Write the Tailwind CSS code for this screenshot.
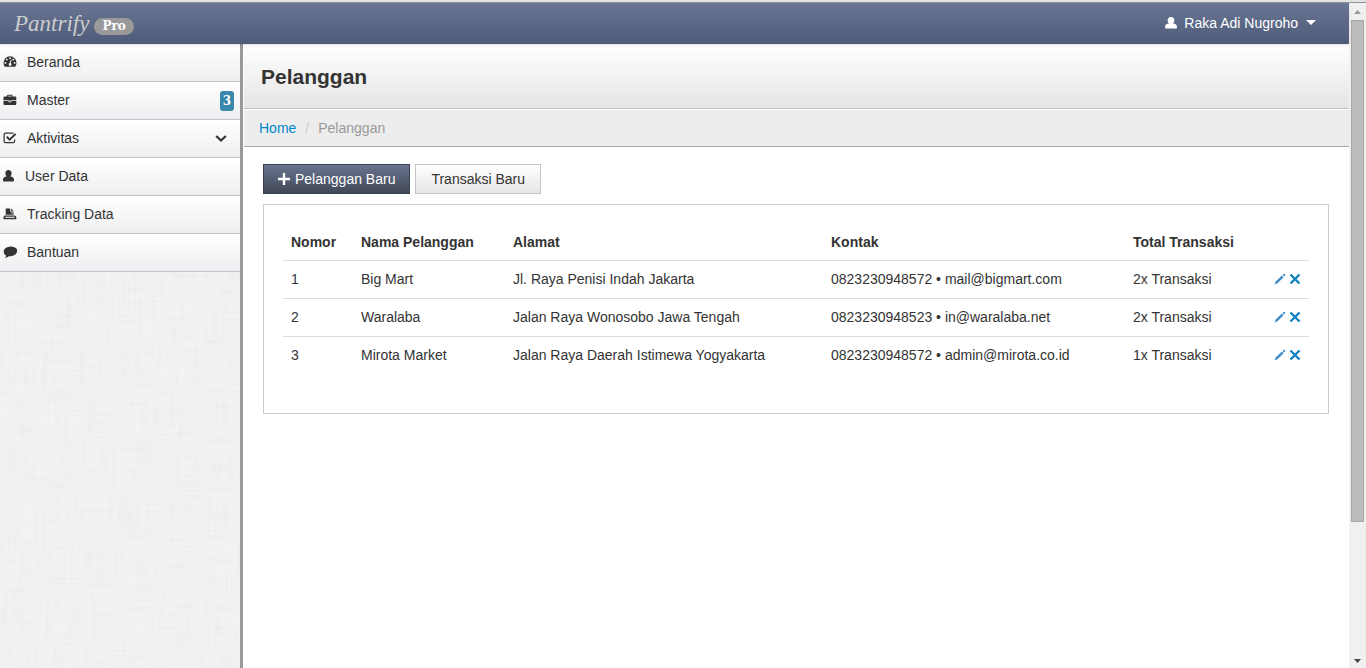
<!DOCTYPE html>
<html lang="id">
<head>
<meta charset="utf-8">
<title>Pelanggan - Pantrify Pro</title>
<script src="https://cdn.jsdelivr.net/npm/@tailwindcss/browser@4"></script>
</head>
<body class="flex h-screen flex-col overflow-hidden bg-white font-['Liberation_Sans',Arial,sans-serif] text-sm leading-5 text-[#333]">
<svg class="hidden" aria-hidden="true">
  <symbol id="user" viewBox="0 0 11 12" preserveAspectRatio="none"><path d="M5.500 0C7.500 0 8.600 1.300 8.600 3.200c0 1.300-.5 2.500-1.200 3.200C9.500 6.700 11 7.700 11 9.600V10.600Q11 11.500 10 11.500H1Q0 11.500 0 10.600V9.600C0 7.700 1.500 6.700 3.600 6.400 2.900 5.700 2.400 4.500 2.400 3.200 2.400 1.300 3.500 0 5.500 0z"/></symbol>
  <symbol id="pencil" viewBox="0 0 12 12"><path d="M.6 11.400 1.700 8.500 7.900 2.500 9.600 4.200 3.500 10.200zM8.600 1.900l.9-.9q.5-.4 1 0l.6.6q.4.500 0 1l-.9.9z"/></symbol>
  <symbol id="cross" viewBox="0 0 12 12"><path d="M1.500 1.500 10.500 10.500M10.500 1.500 1.500 10.500" fill="none" stroke="currentColor" stroke-width="2.400"/></symbol>
</svg>

<div class="h-[3px] shrink-0 border-b border-[#8f949c] bg-[#e4e4e4]"></div>
<div class="flex min-h-0 flex-1">
  <div class="flex min-w-0 flex-1 flex-col">
    <header class="z-10 flex h-[41px] shrink-0 items-center justify-between bg-linear-to-b from-[#6a7693] to-[#4e5b79] pr-[33px] pl-3.5 shadow-sm">
      <a href="#" class="flex items-center gap-[5px]">
        <span class="font-['Liberation_Serif',serif] text-[23px] leading-10 text-[#ccc] italic">Pantrify</span>
        <span class="mt-1.5 rounded-full bg-[#999] px-2 font-['DejaVu_Serif',serif] text-xs leading-[17px] font-bold text-white">Pro</span>
      </a>
      <button type="button" class="flex items-center pb-0.5 text-white">
        <svg class="mr-[7px] h-3 w-3 fill-current"><use href="#user"/></svg>
        Raka Adi Nugroho
        <svg class="ml-2 h-[5px] w-[10px] fill-current" viewBox="0 0 10 5"><path d="M0 0H10L5 5z"/></svg>
      </button>
    </header>

    <div class="flex min-h-0 flex-1">
      <aside class="relative mr-px w-[243px] shrink-0 border-r-3 border-[#999] bg-[#f3f3f3]">
        <svg class="absolute inset-0 h-full w-full opacity-50" aria-hidden="true">
          <filter id="weft" x="0" y="0" width="100%" height="100%"><feTurbulence type="fractalNoise" baseFrequency="0.025 0.35" numOctaves="2" seed="3"/><feColorMatrix values="0 0 0 0 .6  0 0 0 0 .6  0 0 0 0 .6  .5 0 0 0 -.19"/></filter>
          <filter id="warp" x="0" y="0" width="100%" height="100%"><feTurbulence type="fractalNoise" baseFrequency="0.35 0.02" numOctaves="2" seed="8"/><feColorMatrix values="0 0 0 0 .6  0 0 0 0 .6  0 0 0 0 .6  .5 0 0 0 -.19"/></filter>
          <rect width="100%" height="100%" filter="url(#weft)"/><rect width="100%" height="100%" filter="url(#warp)"/>
        </svg>
        <nav class="relative">
          <a href="#" class="flex h-[38px] items-center border-b border-[#c4c4c8] bg-linear-to-b from-white to-[#efeff2] pb-0.5 pl-[3px]">
            <svg class="mr-[10px] h-[14px] w-[14px]" viewBox="0 0 14 14"><path fill="#333" d="M7 1.300A6.500 6.500 0 0 0 .5 7.800c0 1.400.4 2.700 1.100 3.700q.2.300.6.300h9.600q.4 0 .6-.3c.7-1 1.100-2.300 1.100-3.700A6.500 6.500 0 0 0 7 1.300z"/><g fill="#fff"><circle cx="2.400" cy="7.900" r=".9"/><circle cx="3.800" cy="4.600" r=".9"/><circle cx="7" cy="3.200" r=".9"/><circle cx="10.200" cy="4.600" r=".9"/><circle cx="11.600" cy="7.900" r=".9"/><path d="M7.700 4.800 8.600 5 7.800 8.200A1.400 1.400 0 1 1 6.900 8z"/></g></svg>
            Beranda</a>
          <a href="#" class="flex h-[38px] items-center border-b border-[#c4c4c8] bg-linear-to-b from-white to-[#efeff2] pb-0.5 pl-[3px]">
            <svg class="mr-[10px] h-[14px] w-[14px]" viewBox="0 0 14 14"><path fill="#333" fill-rule="evenodd" d="M4 3.500V2.700Q4 1.700 5 1.700H8.500Q9.500 1.700 9.500 2.700V3.500H12.300Q13.300 3.500 13.300 4.500V7.200H.5V4.500Q.5 3.500 1.500 3.500zM5.100 3.500H8.400V2.800H5.100zM.5 8H5.500V9.200H8.200V8H13.300V11Q13.300 12 12.300 12H1.500Q.5 12 .5 11zM6.300 7.200H7.500V8.400H6.300z"/></svg>
            Master
            <span class="mt-0.5 mr-1.5 ml-auto rounded-[3px] bg-[#3a87ad] px-[3px] font-['DejaVu_Serif',serif] text-xs leading-5 font-bold text-white">3</span></a>
          <a href="#" class="flex h-[38px] items-center border-b border-[#c4c4c8] bg-linear-to-b from-white to-[#efeff2] pb-0.5 pl-[3px]">
            <svg class="mr-[10px] h-[14px] w-[14px]" viewBox="0 0 14 14" fill="none" stroke="#333"><path stroke-width="1.200" d="M10.500 2.100H2.500Q1.100 2.100 1.100 3.500V10.300Q1.100 11.700 2.500 11.700H10.200Q11.600 11.700 11.600 10.300V8.500"/><path stroke-width="2" d="M3.800 5.800 6.700 8.700 12.600 2.900"/></svg>
            Aktivitas
            <svg class="mr-[13px] ml-auto h-[14px] w-3" viewBox="0 0 12 14" fill="none" stroke="#333" stroke-width="2.200"><path d="M1.200 5 6 9.600 10.800 5"/></svg></a>
          <a href="#" class="flex h-[38px] items-center border-b border-[#c4c4c8] bg-linear-to-b from-white to-[#efeff2] pb-0.5 pl-[3px]">
            <svg class="mr-[11px] h-3 w-[11px] fill-[#333]"><use href="#user"/></svg>
            User Data</a>
          <a href="#" class="flex h-[38px] items-center border-b border-[#c4c4c8] bg-linear-to-b from-white to-[#efeff2] pb-0.5 pl-[3px]">
            <svg class="mr-[10px] h-[14px] w-[14px] fill-[#333]" viewBox="0 0 14 14"><path d="M2.700 1.500H7V4.500H10.600V7.800H2.700zM7.800 1.500 10.600 3.800H7.800zM1.500 8.500H12Q13.300 9 13.300 10.300V12.300H.5V10.300Q.5 9 1.500 8.500z"/><path fill="#fff" d="M2.200 9.700H11.600V10.700H2.200zM8.300 5.500H10.600V6.200H8.300z"/></svg>
            Tracking Data</a>
          <a href="#" class="flex h-[38px] items-center border-b border-[#c4c4c8] bg-linear-to-b from-white to-[#efeff2] pb-0.5 pl-[3px]">
            <svg class="mr-[10px] h-[14px] w-[14px] fill-[#333]" viewBox="0 100 1792 1792"><path d="M1792 896q0 174-120 321.500t-326 233-450 85.500q-70 0-145-8-198 175-460 192-30 4-40-18-3-15 14-40 90-50 120-110 25-50 30-90-157-89-240-220t-83-308q0-130 71-248.500t191-204.500 286-136.500 348-50.500q244 0 450 85.500t326 233 120 321.500z"/></svg>
            Bantuan</a>
        </nav>
      </aside>

      <main class="min-w-0 flex-1">
        <div class="flex h-[65px] items-center border-b border-[#c0c0c0] bg-linear-to-b from-white to-[#e5e5e5] px-[17px] pt-0.5">
          <h1 class="text-[21px] leading-7 font-bold">Pelanggan</h1>
        </div>
        <nav class="flex h-[38px] items-center border-t border-b border-t-white border-b-[#a8a8a8] bg-[#ededed] px-[15px]">
          <a href="#" class="text-[#08c]">Home</a><span class="px-[9px] text-[#ccc]">/</span><span class="text-[#999]">Pelanggan</span>
        </nav>
        <div class="px-[19px] pt-[17px] pr-5">
          <div class="flex gap-[5px]">
            <button type="button" class="flex h-[30px] items-center border border-[#39404f] bg-linear-to-b from-[#69748f] to-[#414958] px-3.5 text-white">
              <svg class="mr-[5px] h-3 w-3 fill-current" viewBox="0 0 11 11"><path d="M4.400 0H6.600V4.400H11V6.600H6.600V11H4.400V6.600H0V4.400H4.400z"/></svg>Pelanggan Baru</button>
            <button type="button" class="h-[30px] border border-[#c5c5c5] bg-linear-to-b from-white to-[#e6e6e6] px-[15px]">Transaksi Baru</button>
          </div>
          <section class="mt-[10px] border border-[#ccc] px-[19px] pt-[18px] pb-[39px]">
            <table class="w-full table-fixed text-left">
              <colgroup><col class="w-[70px]"><col class="w-[152px]"><col class="w-[318px]"><col class="w-[302px]"><col class="w-[142px]"><col></colgroup>
              <thead><tr class="h-[37px]"><th class="px-2 pt-0.5">Nomor</th><th class="px-2 pt-0.5">Nama Pelanggan</th><th class="px-2 pt-0.5">Alamat</th><th class="px-2 pt-0.5">Kontak</th><th class="px-2 pt-0.5">Total Transaksi</th><th aria-label="Aksi"></th></tr></thead>
              <tbody>
                <tr class="h-[38px] border-t border-[#ddd]"><td class="px-2">1</td><td class="px-2">Big Mart</td><td class="px-2">Jl. Raya Penisi Indah Jakarta</td><td class="px-2">0823230948572 • mail@bigmart.com</td><td class="px-2">2x Transaksi</td>
                  <td><div class="flex justify-end gap-[3px] pr-2 text-[#1480bf]"><a href="#" aria-label="Ubah"><svg class="h-3 w-3 fill-[#3f8cc8]"><use href="#pencil"/></svg></a><a href="#" aria-label="Hapus"><svg class="h-3 w-3"><use href="#cross"/></svg></a></div></td></tr>
                <tr class="h-[38px] border-t border-[#ddd]"><td class="px-2">2</td><td class="px-2">Waralaba</td><td class="px-2">Jalan Raya Wonosobo Jawa Tengah</td><td class="px-2">0823230948523 • in@waralaba.net</td><td class="px-2">2x Transaksi</td>
                  <td><div class="flex justify-end gap-[3px] pr-2 text-[#1480bf]"><a href="#" aria-label="Ubah"><svg class="h-3 w-3 fill-[#3f8cc8]"><use href="#pencil"/></svg></a><a href="#" aria-label="Hapus"><svg class="h-3 w-3"><use href="#cross"/></svg></a></div></td></tr>
                <tr class="h-[38px] border-t border-[#ddd]"><td class="px-2">3</td><td class="px-2">Mirota Market</td><td class="px-2">Jalan Raya Daerah Istimewa Yogyakarta</td><td class="px-2">0823230948572 • admin@mirota.co.id</td><td class="px-2">1x Transaksi</td>
                  <td><div class="flex justify-end gap-[3px] pr-2 text-[#1480bf]"><a href="#" aria-label="Ubah"><svg class="h-3 w-3 fill-[#3f8cc8]"><use href="#pencil"/></svg></a><a href="#" aria-label="Hapus"><svg class="h-3 w-3"><use href="#cross"/></svg></a></div></td></tr>
              </tbody>
            </table>
          </section>
        </div>
      </main>
    </div>
  </div>

  <div class="flex w-[17px] shrink-0 flex-col items-center bg-[#f0f0f0]" aria-hidden="true">
    <svg class="h-[17px] w-[7px] shrink-0 fill-[#999]" viewBox="0 0 7 17"><path d="M0 11 3.500 7 7 11z"/></svg>
    <div class="h-[502px] w-[13px] shrink-0 border border-[#a6a6a6] bg-[#bcbcbc]"></div>
    <svg class="mt-auto h-[14px] w-[7px] shrink-0 fill-[#444]" viewBox="0 0 7 14"><path d="M0 5 3.500 9 7 5z"/></svg>
  </div>
</div>
</body>
</html>
